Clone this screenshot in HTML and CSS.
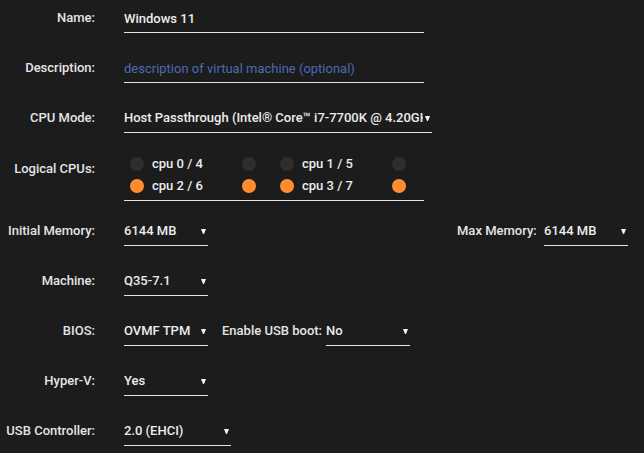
FILE: index.html
```html
<!DOCTYPE html>
<html lang="en">
<head>
<meta charset="utf-8">
<title>VM Settings</title>
<link rel="stylesheet" href="styles.css">
</head>
<body>
<form class="form">
  <div class="row">
    <label class="label" for="name">Name:</label>
    <input class="field field-wide" id="name" type="text" value="Windows 11">
  </div>
  <div class="row">
    <label class="label" for="desc">Description:</label>
    <input class="field field-wide" id="desc" type="text" placeholder="description of virtual machine (optional)">
  </div>
  <div class="row">
    <span class="label">CPU Mode:</span>
    <div class="select select-cpu"><span class="select-value">Host Passthrough (Intel® Core™ i7-7700K @ 4.20GHz)</span><svg class="arrow" viewBox="0 0 5 5"><polygon points="0,0 5,0 3,5 2,5"/></svg></div>
  </div>
  <div class="row row-cpus">
    <span class="label label-cpus">Logical CPUs:</span>
    <div class="cpus">
      <div class="cpu"><span class="dot"></span><span class="cpu-name">cpu 0 / 4</span><span class="dot"></span></div>
      <div class="cpu"><span class="dot"></span><span class="cpu-name">cpu 1 / 5</span><span class="dot"></span></div>
      <div class="cpu"><span class="dot on"></span><span class="cpu-name">cpu 2 / 6</span><span class="dot on"></span></div>
      <div class="cpu"><span class="dot on"></span><span class="cpu-name">cpu 3 / 7</span><span class="dot on"></span></div>
    </div>
  </div>
  <div class="row">
    <span class="label">Initial Memory:</span>
    <div class="select"><span class="select-value">6144 MB</span><svg class="arrow" viewBox="0 0 5 5"><polygon points="0,0 5,0 3,5 2,5"/></svg></div>
    <span class="inline-label inline-max">Max Memory:</span>
    <div class="select"><span class="select-value">6144 MB</span><svg class="arrow" viewBox="0 0 5 5"><polygon points="0,0 5,0 3,5 2,5"/></svg></div>
  </div>
  <div class="row">
    <span class="label">Machine:</span>
    <div class="select"><span class="select-value">Q35-7.1</span><svg class="arrow" viewBox="0 0 5 5"><polygon points="0,0 5,0 3,5 2,5"/></svg></div>
  </div>
  <div class="row">
    <span class="label">BIOS:</span>
    <div class="select"><span class="select-value">OVMF TPM</span><svg class="arrow" viewBox="0 0 5 5"><polygon points="0,0 5,0 3,5 2,5"/></svg></div>
    <span class="inline-label inline-usb">Enable USB boot:</span>
    <div class="select"><span class="select-value">No</span><svg class="arrow" viewBox="0 0 5 5"><polygon points="0,0 5,0 3,5 2,5"/></svg></div>
  </div>
  <div class="row">
    <span class="label">Hyper-V:</span>
    <div class="select"><span class="select-value">Yes</span><svg class="arrow" viewBox="0 0 5 5"><polygon points="0,0 5,0 3,5 2,5"/></svg></div>
  </div>
  <div class="row">
    <span class="label">USB Controller:</span>
    <div class="select select-usb"><span class="select-value">2.0 (EHCI)</span><svg class="arrow" viewBox="0 0 5 5"><polygon points="0,0 5,0 3,5 2,5"/></svg></div>
  </div>
</form>
</body>
</html>
```
FILE: styles.css
```css
html, body {
  margin: 0;
  padding: 0;
  background: #1c1c1c;
}
body {
  font-family: Roboto, "Liberation Sans", Arial, sans-serif;
  font-weight: 500;
  font-size: 13px;
  line-height: 20px;
  color: #e4e4e4;
}
.form {
  display: flex;
  flex-direction: column;
  padding: 8px 16px 0 0;
}
.row {
  display: flex;
  align-items: flex-start;
  margin-bottom: 25px;
}
.label {
  width: 95px;
  flex: none;
  text-align: right;
  margin-right: 29px;
  color: #e4e4e4;
}
.field {
  font: inherit;
  color: #ececec;
  background: transparent;
  border: none;
  border-bottom: 1px solid #e4e4e4;
  outline: none;
  margin: 0;
  padding: 0 0 4px 0;
  height: 25px;
  box-sizing: border-box;
  line-height: 20px;
}
.field-wide {
  width: 300px;
}
.field::placeholder {
  color: #4a6bb3;
  opacity: 1;
  font-weight: 400;
}
.select {
  display: flex;
  align-items: center;
  width: 84px;
  height: 25px;
  box-sizing: border-box;
  padding-bottom: 5px;
  border-bottom: 1px solid #e4e4e4;
  color: #ececec;
  flex: none;
}
.select-cpu {
  width: 308px;
}
.select-usb {
  width: 107px;
}
.select-value {
  flex: 1;
  min-width: 0;
  overflow: hidden;
  white-space: nowrap;
}
.arrow {
  width: 5px;
  height: 5px;
  flex: none;
  margin: 1px 2px 0 2px;
  fill: #f2f2f2;
}
.inline-label {
  flex: none;
  color: #e4e4e4;
}
.inline-usb {
  width: 104px;
  margin-left: 14px;
}
.inline-max {
  margin-left: auto;
  width: 87px;
}
.row-cpus {
  margin-top: -5px;
  margin-bottom: 20px;
}
.label-cpus {
  padding-top: 6px;
}
.cpus {
  display: grid;
  grid-template-columns: 150px 150px;
  width: 300px;
  border-bottom: 1px solid #e4e4e4;
  padding-bottom: 3px;
}
.cpu {
  display: flex;
  align-items: center;
  height: 22px;
  padding-left: 6px;
}
.dot {
  width: 14px;
  height: 14px;
  border-radius: 50%;
  background: #2e2e2e;
  flex: none;
  margin-top: -1px;
}
.dot.on {
  background: #ff8c2f;
}
.cpu-name {
  width: 90px;
  margin-left: 8px;
  flex: none;
  color: #ececec;
}
```
